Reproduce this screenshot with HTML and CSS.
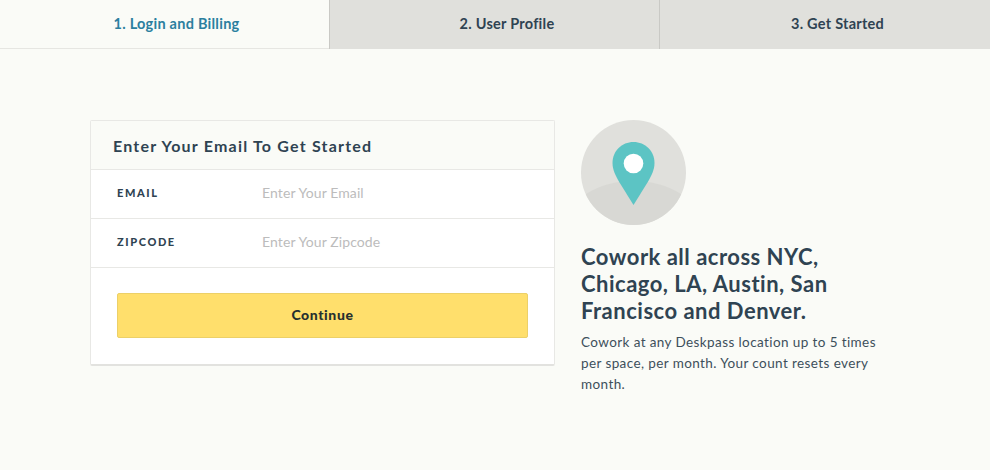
FILE: index.html
```html
<!DOCTYPE html>
<html lang="en">
<head>
  <meta charset="UTF-8">
  <title>Deskpass - Login and Billing</title>
  <link rel="stylesheet" href="styles.css">
</head>
<body>

  <!-- steps -->
  <div class="steps">
    <div class="step active">1. Login and Billing</div>
    <div class="step">2. User Profile</div>
    <div class="step">3. Get Started</div>
  </div>

  <div class="content">
    <!-- signup form -->
    <form class="card">
      <div class="card-title">Enter Your Email To Get Started</div>
      <label class="field">
        <span class="field-label">EMAIL</span>
        <input class="field-input" type="text" placeholder="Enter Your Email">
      </label>
      <label class="field">
        <span class="field-label">ZIPCODE</span>
        <input class="field-input" type="text" placeholder="Enter Your Zipcode">
      </label>
      <div class="card-footer">
        <button class="btn" type="button">Continue</button>
      </div>
    </form>

    <!-- side info -->
    <div class="info">
      <svg class="pin" width="105" height="105" viewBox="0 0 105 105">
        <defs>
          <clipPath id="disc"><circle cx="52.5" cy="52.5" r="52.5"/></clipPath>
        </defs>
        <circle cx="52.5" cy="52.5" r="52.5" fill="#e0e0dc"/>
        <ellipse cx="52.5" cy="104" rx="66" ry="43" fill="#d8d8d4" clip-path="url(#disc)"/>
        <path d="M52.5 22C64.2 22 73.5 31.2 73.5 42.8C73.5 50 70.5 55.5 66.5 62.5L52.5 85L38.5 62.5C34.5 55.5 31.5 50 31.5 42.8C31.5 31.2 40.8 22 52.5 22Z" fill="#5cc4c4"/>
        <circle cx="52.5" cy="43.5" r="9.8" fill="#fff"/>
      </svg>
      <h2 class="info-title">Cowork all across NYC, Chicago, LA, Austin, San Francisco and Denver.</h2>
      <p class="info-text">Cowork at any Deskpass location up to 5 times per space, per month. Your count resets every month.</p>
    </div>
  </div>

</body>
</html>
```

FILE: styles.css
```css
body {
  margin: 0;
  font-family: 'Lato', 'Liberation Sans', sans-serif;
  background: #fafbf7;
  color: #2f4352;
}

/* steps */
.steps {
  display: grid;
  grid-template-columns: 329px 330px 1fr;
  height: 49px;
}
.step {
  display: flex;
  justify-content: center;
  align-items: center;
  padding: 0 0 2px 25px;
  background: #e0e0dc;
  border-left: 1px solid #c9c9c5;
  font-size: 14.5px;
  font-weight: 700;
  letter-spacing: 0.25px;
  color: #2f4352;
}
.step.active {
  padding-left: 24px;
  background: #fafbf7;
  border-left: none;
  border-bottom: 1px solid #e6e6e2;
  color: #2b7f9f;
}

/* main area */
.content {
  display: flex;
  align-items: flex-start;
  gap: 26px;
  padding: 71px 0 0 90px;
}

/* form card */
.card {
  width: 463px;
  background: #fff;
  border: 1px solid #e8e8e5;
  border-bottom: 2px solid #e2e2df;
  border-radius: 2px;
}
.card-title {
  height: 48px;
  line-height: 50px;
  padding-left: 22px;
  background: #fafbf7;
  border-bottom: 1px solid #e8e8e5;
  font-size: 16px;
  font-weight: 700;
  letter-spacing: 1.2px;
}
.field {
  display: flex;
  align-items: center;
  box-sizing: border-box;
  height: 49px;
  padding: 0 0 3px 26px;
  border-bottom: 1px solid #e8e8e5;
}
.field-label {
  width: 145px;
  font-size: 11px;
  font-weight: 900;
  letter-spacing: 1.6px;
}
.field-input {
  flex: 1;
  border: none;
  outline: none;
  padding: 0;
  font-family: inherit;
  font-size: 14px;
  letter-spacing: 0.1px;
  background: transparent;
}
.field-input::placeholder {
  color: #bcbcbc;
  opacity: 1;
}
.card-footer {
  padding: 25px 26px 26px;
}
.btn {
  display: block;
  width: 100%;
  height: 45px;
  padding-bottom: 3px;
  background: #ffdf6c;
  border: 1px solid #ecd068;
  border-radius: 2px;
  font-family: inherit;
  font-size: 14px;
  font-weight: 900;
  letter-spacing: 0.6px;
  color: #26302f;
  cursor: pointer;
}

/* side info */
.info {
  width: 300px;
}
.pin {
  display: block;
}
.info-title {
  margin: 18px 0 0;
  font-size: 22px;
  line-height: 27px;
  font-weight: 700;
  letter-spacing: 0.5px;
}
.info-text {
  margin: 8px 0 0;
  font-size: 13.5px;
  line-height: 21px;
  letter-spacing: 0.4px;
  color: #3d4f5b;
}
```
